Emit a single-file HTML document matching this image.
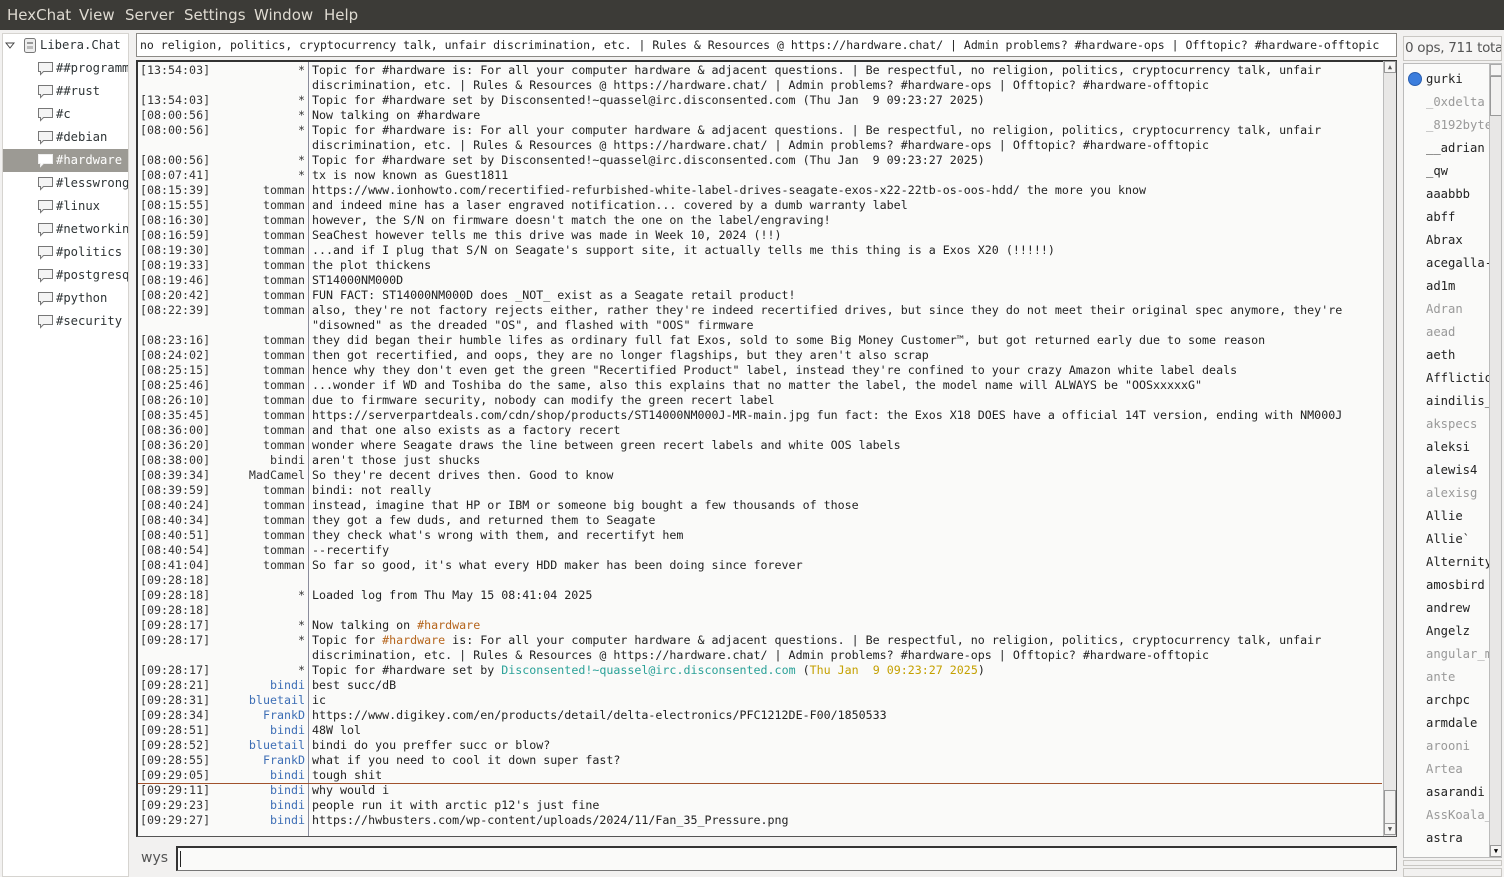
<!DOCTYPE html>
<html><head><meta charset="utf-8"><style>
*{margin:0;padding:0;box-sizing:border-box}
body{width:1504px;height:877px;background:#f2f1f0;position:relative;overflow:hidden;font-family:"DejaVu Sans Mono","Liberation Mono",monospace;}
#menu{position:absolute;left:0;top:0;width:1504px;height:30px;background:#3c3b37;color:#dfdbd2;font-family:"DejaVu Sans","Liberation Sans",sans-serif;font-size:15px;}
#menu span{position:absolute;top:6px}
#tree{position:absolute;left:2px;top:33px;width:127px;height:844px;background:#fff;border:1px solid #d6d4d0;font-size:12.2px;color:#2e3436;overflow:hidden}
.ti{position:absolute;left:0;width:125px;height:23px;line-height:23px;white-space:nowrap;overflow:hidden}
.ti svg{position:absolute;left:34px;top:4px}
.ti b{font-weight:normal;position:absolute;left:53px}
.sel{background:#9c9a94;color:#fff}
#topic{position:absolute;left:136px;top:33px;width:1261px;height:24px;background:#fff;border:1px solid #8c8a86;font-size:11.5px;line-height:22px;padding-left:3px;color:#222;white-space:nowrap;overflow:hidden}
#chat{position:absolute;left:136px;top:60px;width:1261px;height:777px;background:#fafaf9;border:1px solid #555;border-top:2px solid #333;border-left:2px solid #333;overflow:hidden}
#sep{position:absolute;left:170px;top:0;width:1px;height:780px;background:#8a8c9c}
.r{position:absolute;left:0;height:15px;font-size:11.65px;line-height:15px;white-space:pre;color:#222;margin-top:1px}
.r .t{position:absolute;left:2px;color:#333}
.r .n{position:absolute;right:-167px;width:120px;text-align:right;color:#333}
.r .m{position:absolute;left:174px}
.bl{color:#3d6eb5!important}
.g{color:#4e9a06}.y{color:#c4a000}
#vs{position:absolute;left:1383px;top:61px;width:13px;height:775px;background:#e8e7e6;border-left:1px solid #bbb}
#inlab{position:absolute;left:141px;top:850px;font-family:"DejaVu Sans","Liberation Sans",sans-serif;font-size:14px;color:#555}
#inp{position:absolute;left:176px;top:846px;width:1221px;height:25px;background:#fafaf9;border:1px solid #777;border-top:2px solid #333;border-left:2px solid #333}
#cnt{position:absolute;left:1403px;top:36px;width:99px;height:25px;border:1px solid #c9c7c3;background:#f6f5f4;font-family:"DejaVu Sans","Liberation Sans",sans-serif;font-size:13.5px;letter-spacing:-0.3px;color:#555;line-height:23px;padding-left:1px;white-space:nowrap;overflow:hidden}
#ul{position:absolute;left:1403px;top:63px;width:99px;height:795px;background:#fafaf9;border:1px solid #bbb;overflow:hidden}
.u{position:absolute;left:22px;font-size:12.2px;color:#222;white-space:nowrap;margin-top:1px}
.u.a{color:#999}
</style></head><body>
<div id="menu"><span style="left:7px">HexChat</span><span style="left:79px">View</span><span style="left:125px">Server</span><span style="left:184px">Settings</span><span style="left:254px">Window</span><span style="left:324px">Help</span></div>
<div id="tree">
<div class="ti" style="top:0"><svg width="10" height="10" style="left:2px;top:7px"><path d="M1 2h8L5 7z" fill="none" stroke="#444"/></svg><svg width="14" height="17" style="left:20px;top:3px"><rect x="1.5" y="1.5" width="11" height="14" rx="2" fill="#eee" stroke="#777"/><rect x="4" y="5" width="6" height="2" fill="#999"/><rect x="4" y="9" width="6" height="3" fill="#bbb"/></svg><b style="left:37px">Libera.Chat</b></div>
<div class="ti" style="top:23px"><svg width="18" height="15"><path d="M1.5 1.5h14v9h-9l-3 3v-3h-2z" fill="#f4f4f4" stroke="#777"/></svg><b>##programming</b></div>
<div class="ti" style="top:46px"><svg width="18" height="15"><path d="M1.5 1.5h14v9h-9l-3 3v-3h-2z" fill="#f4f4f4" stroke="#777"/></svg><b>##rust</b></div>
<div class="ti" style="top:69px"><svg width="18" height="15"><path d="M1.5 1.5h14v9h-9l-3 3v-3h-2z" fill="#f4f4f4" stroke="#777"/></svg><b>#c</b></div>
<div class="ti" style="top:92px"><svg width="18" height="15"><path d="M1.5 1.5h14v9h-9l-3 3v-3h-2z" fill="#f4f4f4" stroke="#777"/></svg><b>#debian</b></div>
<div class="ti sel" style="top:115px"><svg width="18" height="15"><path d="M1.5 1.5h14v9h-9l-3 3v-3h-2z" fill="#fff" stroke="#eee"/></svg><b>#hardware</b></div>
<div class="ti" style="top:138px"><svg width="18" height="15"><path d="M1.5 1.5h14v9h-9l-3 3v-3h-2z" fill="#f4f4f4" stroke="#777"/></svg><b>#lesswrong</b></div>
<div class="ti" style="top:161px"><svg width="18" height="15"><path d="M1.5 1.5h14v9h-9l-3 3v-3h-2z" fill="#f4f4f4" stroke="#777"/></svg><b>#linux</b></div>
<div class="ti" style="top:184px"><svg width="18" height="15"><path d="M1.5 1.5h14v9h-9l-3 3v-3h-2z" fill="#f4f4f4" stroke="#777"/></svg><b>#networking</b></div>
<div class="ti" style="top:207px"><svg width="18" height="15"><path d="M1.5 1.5h14v9h-9l-3 3v-3h-2z" fill="#f4f4f4" stroke="#777"/></svg><b>#politics</b></div>
<div class="ti" style="top:230px"><svg width="18" height="15"><path d="M1.5 1.5h14v9h-9l-3 3v-3h-2z" fill="#f4f4f4" stroke="#777"/></svg><b>#postgresql</b></div>
<div class="ti" style="top:253px"><svg width="18" height="15"><path d="M1.5 1.5h14v9h-9l-3 3v-3h-2z" fill="#f4f4f4" stroke="#777"/></svg><b>#python</b></div>
<div class="ti" style="top:276px"><svg width="18" height="15"><path d="M1.5 1.5h14v9h-9l-3 3v-3h-2z" fill="#f4f4f4" stroke="#777"/></svg><b>#security</b></div>
</div>
<div id="topic">no religion, politics, cryptocurrency talk, unfair discrimination, etc. | Rules &amp; Resources @ https://hardware.chat/ | Admin problems? #hardware-ops | Offtopic? #hardware-offtopic</div>
<div id="chat">
<div id="sep"></div>
<div class="r" style="top:0"><span class="t">[13:54:03]</span><span class="n">*</span><span class="m">Topic for #hardware is: For all your computer hardware &amp; adjacent questions. | Be respectful, no religion, politics, cryptocurrency talk, unfair</span></div>
<div class="r" style="top:15px"><span class="m">discrimination, etc. | Rules &amp; Resources @ https://hardware.chat/ | Admin problems? #hardware-ops | Offtopic? #hardware-offtopic</span></div>
<div class="r" style="top:30px"><span class="t">[13:54:03]</span><span class="n">*</span><span class="m">Topic for #hardware set by Disconsented!~quassel@irc.disconsented.com (Thu Jan  9 09:23:27 2025)</span></div>
<div class="r" style="top:45px"><span class="t">[08:00:56]</span><span class="n">*</span><span class="m">Now talking on #hardware</span></div>
<div class="r" style="top:60px"><span class="t">[08:00:56]</span><span class="n">*</span><span class="m">Topic for #hardware is: For all your computer hardware &amp; adjacent questions. | Be respectful, no religion, politics, cryptocurrency talk, unfair</span></div>
<div class="r" style="top:75px"><span class="m">discrimination, etc. | Rules &amp; Resources @ https://hardware.chat/ | Admin problems? #hardware-ops | Offtopic? #hardware-offtopic</span></div>
<div class="r" style="top:90px"><span class="t">[08:00:56]</span><span class="n">*</span><span class="m">Topic for #hardware set by Disconsented!~quassel@irc.disconsented.com (Thu Jan  9 09:23:27 2025)</span></div>
<div class="r" style="top:105px"><span class="t">[08:07:41]</span><span class="n">*</span><span class="m">tx is now known as Guest1811</span></div>
<div class="r" style="top:120px"><span class="t">[08:15:39]</span><span class="n">tomman</span><span class="m">https://www.ionhowto.com/recertified-refurbished-white-label-drives-seagate-exos-x22-22tb-os-oos-hdd/ the more you know</span></div>
<div class="r" style="top:135px"><span class="t">[08:15:55]</span><span class="n">tomman</span><span class="m">and indeed mine has a laser engraved notification... covered by a dumb warranty label</span></div>
<div class="r" style="top:150px"><span class="t">[08:16:30]</span><span class="n">tomman</span><span class="m">however, the S/N on firmware doesn't match the one on the label/engraving!</span></div>
<div class="r" style="top:165px"><span class="t">[08:16:59]</span><span class="n">tomman</span><span class="m">SeaChest however tells me this drive was made in Week 10, 2024 (!!)</span></div>
<div class="r" style="top:180px"><span class="t">[08:19:30]</span><span class="n">tomman</span><span class="m">...and if I plug that S/N on Seagate's support site, it actually tells me this thing is a Exos X20 (!!!!!)</span></div>
<div class="r" style="top:195px"><span class="t">[08:19:33]</span><span class="n">tomman</span><span class="m">the plot thickens</span></div>
<div class="r" style="top:210px"><span class="t">[08:19:46]</span><span class="n">tomman</span><span class="m">ST14000NM000D</span></div>
<div class="r" style="top:225px"><span class="t">[08:20:42]</span><span class="n">tomman</span><span class="m">FUN FACT: ST14000NM000D does _NOT_ exist as a Seagate retail product!</span></div>
<div class="r" style="top:240px"><span class="t">[08:22:39]</span><span class="n">tomman</span><span class="m">also, they're not factory rejects either, rather they're indeed recertified drives, but since they do not meet their original spec anymore, they're</span></div>
<div class="r" style="top:255px"><span class="m">"disowned" as the dreaded "OS", and flashed with "OOS" firmware</span></div>
<div class="r" style="top:270px"><span class="t">[08:23:16]</span><span class="n">tomman</span><span class="m">they did began their humble lifes as ordinary full fat Exos, sold to some Big Money Customer™, but got returned early due to some reason</span></div>
<div class="r" style="top:285px"><span class="t">[08:24:02]</span><span class="n">tomman</span><span class="m">then got recertified, and oops, they are no longer flagships, but they aren't also scrap</span></div>
<div class="r" style="top:300px"><span class="t">[08:25:15]</span><span class="n">tomman</span><span class="m">hence why they don't even get the green "Recertified Product" label, instead they're confined to your crazy Amazon white label deals</span></div>
<div class="r" style="top:315px"><span class="t">[08:25:46]</span><span class="n">tomman</span><span class="m">...wonder if WD and Toshiba do the same, also this explains that no matter the label, the model name will ALWAYS be "OOSxxxxxG"</span></div>
<div class="r" style="top:330px"><span class="t">[08:26:10]</span><span class="n">tomman</span><span class="m">due to firmware security, nobody can modify the green recert label</span></div>
<div class="r" style="top:345px"><span class="t">[08:35:45]</span><span class="n">tomman</span><span class="m">https://serverpartdeals.com/cdn/shop/products/ST14000NM000J-MR-main.jpg fun fact: the Exos X18 DOES have a official 14T version, ending with NM000J</span></div>
<div class="r" style="top:360px"><span class="t">[08:36:00]</span><span class="n">tomman</span><span class="m">and that one also exists as a factory recert</span></div>
<div class="r" style="top:375px"><span class="t">[08:36:20]</span><span class="n">tomman</span><span class="m">wonder where Seagate draws the line between green recert labels and white OOS labels</span></div>
<div class="r" style="top:390px"><span class="t">[08:38:00]</span><span class="n">bindi</span><span class="m">aren't those just shucks</span></div>
<div class="r" style="top:405px"><span class="t">[08:39:34]</span><span class="n">MadCamel</span><span class="m">So they're decent drives then. Good to know</span></div>
<div class="r" style="top:420px"><span class="t">[08:39:59]</span><span class="n">tomman</span><span class="m">bindi: not really</span></div>
<div class="r" style="top:435px"><span class="t">[08:40:24]</span><span class="n">tomman</span><span class="m">instead, imagine that HP or IBM or someone big bought a few thousands of those</span></div>
<div class="r" style="top:450px"><span class="t">[08:40:34]</span><span class="n">tomman</span><span class="m">they got a few duds, and returned them to Seagate</span></div>
<div class="r" style="top:465px"><span class="t">[08:40:51]</span><span class="n">tomman</span><span class="m">they check what's wrong with them, and recertifyt hem</span></div>
<div class="r" style="top:480px"><span class="t">[08:40:54]</span><span class="n">tomman</span><span class="m">--recertify</span></div>
<div class="r" style="top:495px"><span class="t">[08:41:04]</span><span class="n">tomman</span><span class="m">So far so good, it's what every HDD maker has been doing since forever</span></div>
<div class="r" style="top:510px"><span class="t">[09:28:18]</span></div>
<div class="r" style="top:525px"><span class="t">[09:28:18]</span><span class="n">*</span><span class="m">Loaded log from Thu May 15 08:41:04 2025</span></div>
<div class="r" style="top:540px"><span class="t">[09:28:18]</span></div>
<div class="r" style="top:555px"><span class="t">[09:28:17]</span><span class="n g">*</span><span class="m">Now talking on <span style="color:#b5651d">#hardware</span></span></div>
<div class="r" style="top:570px"><span class="t">[09:28:17]</span><span class="n g">*</span><span class="m">Topic for <span style="color:#b5651d">#hardware</span> is: For all your computer hardware &amp; adjacent questions. | Be respectful, no religion, politics, cryptocurrency talk, unfair</span></div>
<div class="r" style="top:585px"><span class="m">discrimination, etc. | Rules &amp; Resources @ https://hardware.chat/ | Admin problems? #hardware-ops | Offtopic? #hardware-offtopic</span></div>
<div class="r" style="top:600px"><span class="t">[09:28:17]</span><span class="n g">*</span><span class="m">Topic for #hardware set by <span style="color:#2aa198">Disconsented!~quassel@irc.disconsented.com</span> (<span class="y">Thu Jan  9 09:23:27 2025</span>)</span></div>
<div class="r" style="top:615px"><span class="t">[09:28:21]</span><span class="n bl">bindi</span><span class="m">best succ/dB</span></div>
<div class="r" style="top:630px"><span class="t">[09:28:31]</span><span class="n bl">bluetail</span><span class="m">ic</span></div>
<div class="r" style="top:645px"><span class="t">[09:28:34]</span><span class="n bl">FrankD</span><span class="m">https://www.digikey.com/en/products/detail/delta-electronics/PFC1212DE-F00/1850533</span></div>
<div class="r" style="top:660px"><span class="t">[09:28:51]</span><span class="n bl">bindi</span><span class="m">48W lol</span></div>
<div class="r" style="top:675px"><span class="t">[09:28:52]</span><span class="n bl">bluetail</span><span class="m">bindi do you preffer succ or blow?</span></div>
<div class="r" style="top:690px"><span class="t">[09:28:55]</span><span class="n bl">FrankD</span><span class="m">what if you need to cool it down super fast?</span></div>
<div class="r" style="top:705px"><span class="t">[09:29:05]</span><span class="n bl">bindi</span><span class="m">tough shit</span></div>
<div style="position:absolute;left:0;top:721px;width:1244px;height:1px;background:#a0522d"></div>
<div class="r" style="top:720px"><span class="t">[09:29:11]</span><span class="n bl">bindi</span><span class="m">why would i</span></div>
<div class="r" style="top:735px"><span class="t">[09:29:23]</span><span class="n bl">bindi</span><span class="m">people run it with arctic p12's just fine</span></div>
<div class="r" style="top:750px"><span class="t">[09:29:27]</span><span class="n bl">bindi</span><span class="m">https://hwbusters.com/wp-content/uploads/2024/11/Fan_35_Pressure.png</span></div>
</div>
<div id="vs"><div style="position:absolute;left:0;top:0;width:12px;height:12px;background:#f6f5f4;border:1px solid #999;font-size:7px;text-align:center;line-height:10px;color:#555">▲</div><div style="position:absolute;left:0;top:729px;width:12px;height:34px;background:#f2f1f0;border:1px solid #999"></div><div style="position:absolute;left:0;top:762px;width:12px;height:12px;background:#f6f5f4;border:1px solid #999;font-size:7px;text-align:center;line-height:10px;color:#555">▼</div></div>
<div id="inlab">wys</div>
<div id="inp"><div style="position:absolute;left:2px;top:3px;width:1px;height:16px;background:#222"></div></div>
<div id="cnt">0 ops, 711 total</div>
<div id="ul">
<svg width="16" height="16" style="position:absolute;left:3px;top:7px"><circle cx="8" cy="8" r="6.5" fill="#3b7ddd" stroke="#2a5fb0"/></svg>
<div class="u" style="top:7px">gurki</div>
<div class="u a" style="top:30px">_0xdelta</div>
<div class="u a" style="top:53px">_8192byte</div>
<div class="u" style="top:76px">__adrian</div>
<div class="u" style="top:99px">_qw</div>
<div class="u" style="top:122px">aaabbb</div>
<div class="u" style="top:145px">abff</div>
<div class="u" style="top:168px">Abrax</div>
<div class="u" style="top:191px">acegalla-</div>
<div class="u" style="top:214px">ad1m</div>
<div class="u a" style="top:237px">Adran</div>
<div class="u a" style="top:260px">aead</div>
<div class="u" style="top:283px">aeth</div>
<div class="u" style="top:306px">Afflictio</div>
<div class="u" style="top:329px">aindilis_</div>
<div class="u a" style="top:352px">akspecs</div>
<div class="u" style="top:375px">aleksi</div>
<div class="u" style="top:398px">alewis4</div>
<div class="u a" style="top:421px">alexisg</div>
<div class="u" style="top:444px">Allie</div>
<div class="u" style="top:467px">Allie`</div>
<div class="u" style="top:490px">Alternity</div>
<div class="u" style="top:513px">amosbird</div>
<div class="u" style="top:536px">andrew</div>
<div class="u" style="top:559px">Angelz</div>
<div class="u a" style="top:582px">angular_m</div>
<div class="u a" style="top:605px">ante</div>
<div class="u" style="top:628px">archpc</div>
<div class="u" style="top:651px">armdale</div>
<div class="u a" style="top:674px">arooni</div>
<div class="u a" style="top:697px">Artea</div>
<div class="u" style="top:720px">asarandi</div>
<div class="u a" style="top:743px">AssKoala_</div>
<div class="u" style="top:766px">astra</div>
<div style="position:absolute;left:85px;top:0;width:13px;height:795px;background:#e8e7e6;border-left:1px solid #bbb"><div style="position:absolute;left:0;top:0;width:12px;height:12px;background:#f6f5f4;border:1px solid #aaa"></div><div style="position:absolute;left:0;top:12px;width:12px;height:40px;background:#f2f1f0;border:1px solid #999"></div><div style="position:absolute;left:0;top:781px;width:12px;height:12px;background:#f6f5f4;border:1px solid #999;font-size:7px;text-align:center;line-height:10px">▼</div></div>
</div>
<div style="position:absolute;left:1403px;top:860px;width:99px;height:6px;border:1px solid #c9c7c3"></div>
<div style="position:absolute;left:1403px;top:868px;width:99px;height:9px;border:1px solid #c9c7c3"></div>
</body></html>
